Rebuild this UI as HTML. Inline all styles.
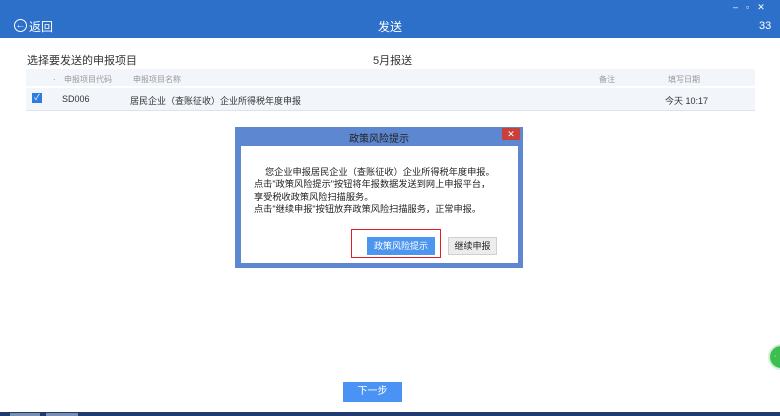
<!DOCTYPE html>
<html><head><meta charset="utf-8"><style>
*{margin:0;padding:0;box-sizing:border-box}
body{width:780px;height:416px;overflow:hidden;background:#fff;position:relative;font-family:"Liberation Sans","Noto Sans CJK SC",sans-serif;color:#333}
.a{position:absolute}
.hdr{left:0;top:0;width:780px;height:38px;background:#2d70c9;color:#fff}
</style></head><body>
<div class="a hdr">
  <div class="a" style="left:14px;top:19px;width:13px;height:13px;border:1px solid #fff;border-radius:50%;font-size:10px;line-height:11px;text-align:center">←</div>
  <div class="a" style="left:29px;top:18px;font-size:12px">返回</div>
  <div class="a" style="left:378px;top:18px;font-size:12px">发送</div>
  <div class="a" style="left:759px;top:20px;font-size:11px">33</div>
  <div class="a" style="left:733px;top:2px;font-size:9px;letter-spacing:8px">–▫✕</div>
</div>
<div class="a" style="left:27px;top:52px;font-size:11px;color:#333">选择要发送的申报项目</div>
<div class="a" style="left:373px;top:52px;font-size:11px;color:#333">5月报送</div>
<div class="a" style="left:26px;top:69px;width:729px;height:42px;background:#f2f5fa"></div>
<div class="a" style="left:26px;top:86px;width:729px;height:2px;background:#fff"></div>
<div class="a" style="left:26px;top:110px;width:729px;height:1px;background:#dde3ec"></div>
<div class="a" style="left:53px;top:72px;font-size:9px;color:#999">.</div>
<div class="a" style="left:64px;top:74px;font-size:8px;color:#999">申报项目代码</div>
<div class="a" style="left:133px;top:74px;font-size:8px;color:#999">申报项目名称</div>
<div class="a" style="left:599px;top:74px;font-size:8px;color:#999">备注</div>
<div class="a" style="left:668px;top:74px;font-size:8px;color:#999">填写日期</div>
<div class="a" style="left:32px;top:93px;width:10px;height:10px;background:#2f7ce0;color:#fff;font-size:8px;line-height:10px;text-align:center">✓</div>
<div class="a" style="left:62px;top:94px;font-size:9px;color:#333">SD006</div>
<div class="a" style="left:130px;top:94px;font-size:9px;color:#333">居民企业（查账征收）企业所得税年度申报</div>
<div class="a" style="left:665px;top:94px;font-size:9px;color:#333">今天 10:17</div>

<div class="a" style="left:235px;top:127px;width:288px;height:141px;background:#5e87d2"></div>
<div class="a" style="left:235px;top:130px;width:288px;font-size:10px;text-align:center;color:#222">政策风险提示</div>
<div class="a" style="left:502px;top:128px;width:18px;height:12px;background:#c9403a;color:#fff;font-size:9px;line-height:12px;text-align:center">✕</div>
<div class="a" style="left:241px;top:146px;width:277px;height:117px;background:#fff"></div>
<div class="a" style="left:254px;top:166px;font-size:9.2px;line-height:12.3px;color:#222;white-space:nowrap"><span style="padding-left:11px"></span>您企业申报居民企业（查账征收）企业所得税年度申报。<br>点击"政策风险提示"按钮将年报数据发送到网上申报平台，<br>享受税收政策风险扫描服务。<br>点击"继续申报"按钮放弃政策风险扫描服务，正常申报。</div>
<div class="a" style="left:351px;top:229px;width:90px;height:29px;border:1.5px solid #e02020"></div>
<div class="a" style="left:367px;top:237px;width:68px;height:18px;background:#4c96f0;color:#fff;font-size:9px;line-height:18px;text-align:center">政策风险提示</div>
<div class="a" style="left:448px;top:237px;width:49px;height:18px;background:#ececec;border:1px solid #d0d0d0;color:#222;font-size:9px;line-height:16px;text-align:center">继续申报</div>

<div class="a" style="left:343px;top:382px;width:59px;height:20px;background:#4a93f5;color:#fff;font-size:10px;line-height:20px;text-align:center">下一步</div>
<div class="a" style="left:768px;top:344px;width:26px;height:26px;border-radius:50%;background:#3bbf4e;border:2px solid #d8eedc;color:#fff;font-size:8px;line-height:22px;padding-left:4px">ᐧ</div>
<div class="a" style="left:0;top:412px;width:780px;height:4px;background:#1e3a6e"></div>
<div class="a" style="left:10px;top:413px;width:30px;height:3px;background:#7a8fb0"></div>
<div class="a" style="left:46px;top:413px;width:32px;height:3px;background:#7a8fb0"></div>
</body></html>
